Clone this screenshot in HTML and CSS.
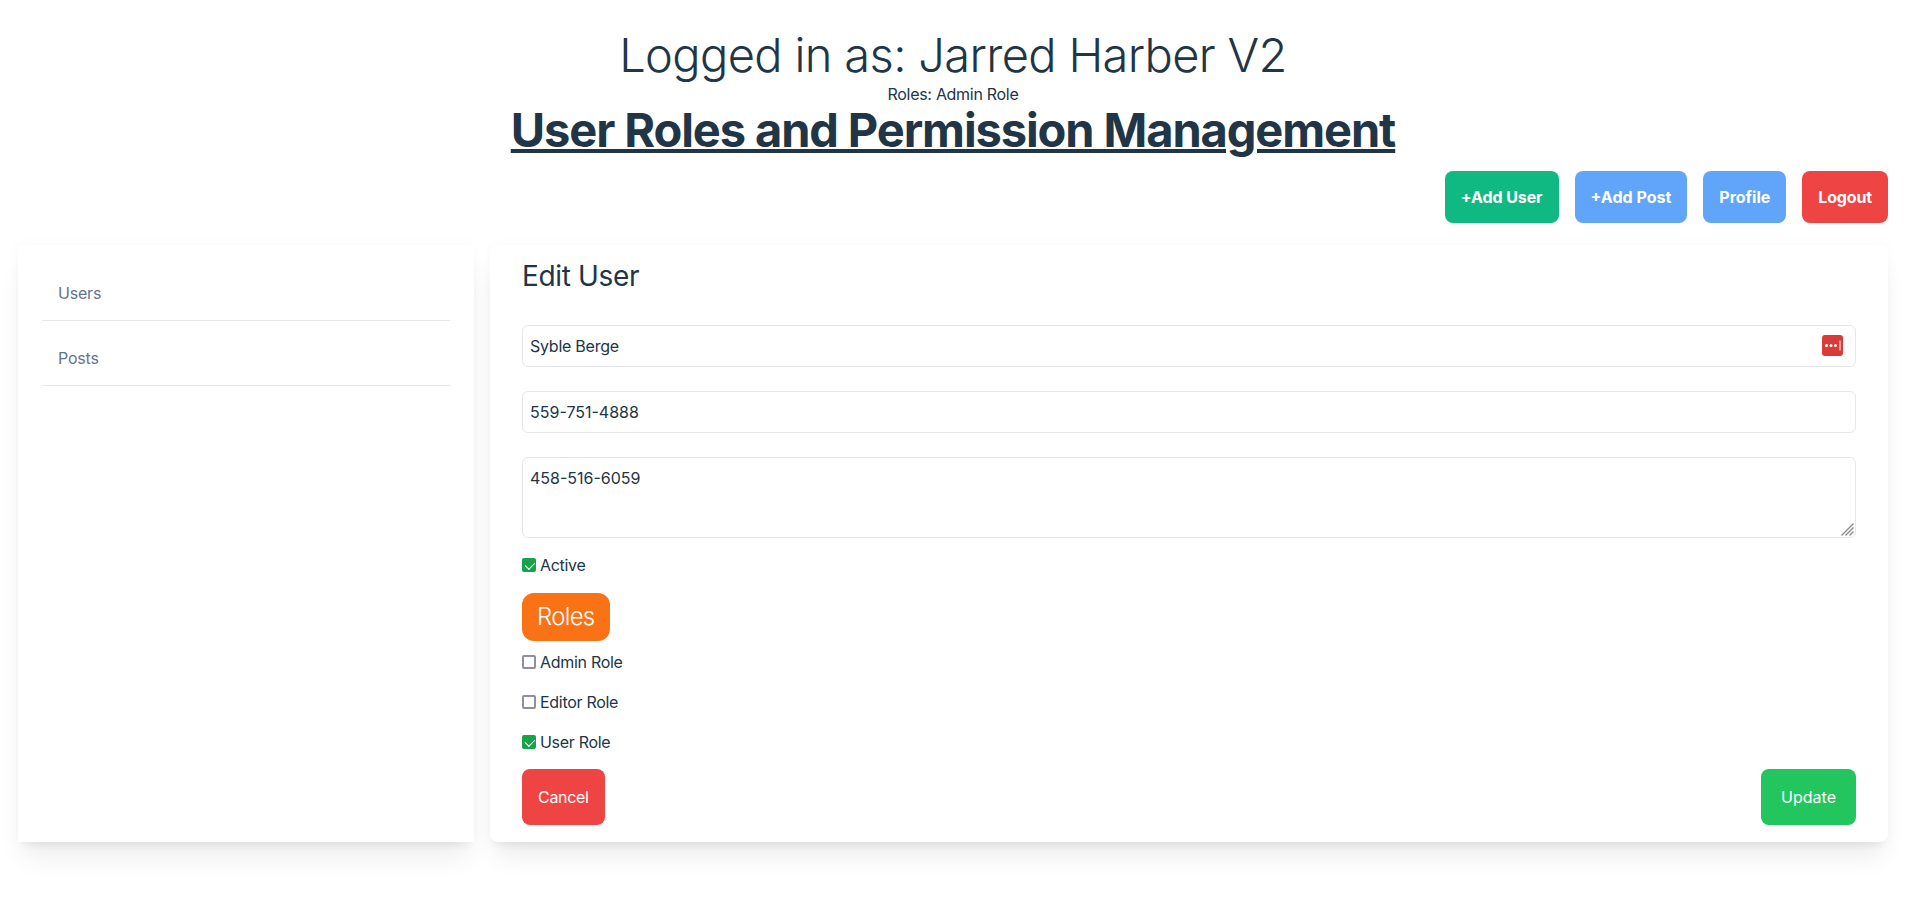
FILE: index.html
```html
<!DOCTYPE html>
<html lang="en">
<head>
<meta charset="utf-8">
<title>User Roles and Permission Management</title>
<link rel="stylesheet" href="styles.css">
</head>
<body>
<div class="app">
  <header class="header">
    <h1 class="logged">Logged in as: Jarred Harber V2</h1>
    <p class="roles-line">Roles: Admin Role</p>
    <h2 class="title">User Roles and Permission Management</h2>
  </header>
  <nav class="actions">
    <a class="btn green" href="#">+Add User</a>
    <a class="btn blue" href="#">+Add Post</a>
    <a class="btn blue" href="#">Profile</a>
    <a class="btn red" href="#">Logout</a>
  </nav>
  <main class="panels">
    <aside class="card sidebar">
      <ul class="menu">
        <li class="menu-item">Users</li>
        <li class="menu-item">Posts</li>
      </ul>
    </aside>
    <section class="card content">
      <h3 class="form-title">Edit User</h3>
      <form class="form">
        <div class="field">
          <input class="input name" type="text" value="Syble Berge">
          <svg class="pm-icon" viewBox="0 0 21 21" aria-hidden="true">
            <rect width="21" height="21" rx="3" fill="#d93a3a"/>
            <circle cx="4.5" cy="10.5" r="1.5" fill="#fff"/>
            <circle cx="9" cy="10.5" r="1.5" fill="#fff"/>
            <circle cx="13.5" cy="10.5" r="1.5" fill="#fff"/>
            <rect x="17.5" y="5.5" width="1" height="10" fill="#fff"/>
          </svg>
        </div>
        <div class="field"><input class="input" type="text" value="559-751-4888"></div>
        <div class="field">
          <textarea class="input area">458-516-6059</textarea>
          <svg class="grip" viewBox="0 0 13 13" aria-hidden="true">
            <path d="M0.5 12.5 L12.5 0.5 M4.5 12.5 L12.5 4.5 M8.5 12.5 L12.5 8.5" stroke="#8a8a8a" stroke-width="1.3" fill="none"/>
          </svg>
        </div>
        <label class="check active"><input type="checkbox" checked>Active</label>
        <div class="roles-badge">Roles</div>
        <label class="check role"><input type="checkbox">Admin Role</label>
        <label class="check role"><input type="checkbox">Editor Role</label>
        <label class="check role"><input type="checkbox" checked>User Role</label>
        <div class="form-actions">
          <button class="form-btn red" type="button">Cancel</button>
          <button class="form-btn green2 wide" type="button">Update</button>
        </div>
      </form>
    </section>
  </main>
</div>
</body>
</html>
```
FILE: styles.css
```css
* { box-sizing: border-box; }
html, body { margin: 0; padding: 0; background: #fff; }
body {
  font-family: Inter, "Liberation Sans", sans-serif;
  color: #213547;
  font-size: 16px;
  line-height: 24px;
}
.app { height: 912px; overflow: hidden; padding: 0 18px; }
.header { text-align: center; padding-top: 25px; }
.logged { margin: 0; font-size: 47px; line-height: 59px; font-weight: 300; letter-spacing: -.65px; }
.roles-line { margin: 0; font-size: 16px; line-height: 20px; letter-spacing: -.3px; }
.title {
  margin: 0; font-size: 47px; line-height: 52px; font-weight: 700; letter-spacing: -1.1px;
  text-decoration: underline; text-decoration-thickness: 4px;
}
.actions { display: flex; justify-content: flex-end; gap: 16px; margin-top: 15px; }
.btn {
  display: block; height: 52px; padding: 14px 16px; border-radius: 8px;
  color: #fff; font-weight: 700; text-decoration: none; font-size: 16px; line-height: 24px;
}
.green { background: #10b981; letter-spacing: -.1px; }
.blue { background: #60a5fa; }
.red { background: #ef4444; }
.btn.red { letter-spacing: -.15px; }
.green2 { background: #22c55e; }
.panels { display: flex; gap: 16px; margin-top: 22px; height: 597px; }
.card {
  background: #fff;
  box-shadow: 0 20px 25px -5px rgba(0,0,0,.07), 0 8px 10px -6px rgba(0,0,0,.07), 0 0 12px rgba(0,0,0,.03);
}
.sidebar { width: 456px; flex: none; padding: 11px 24px; }
.menu { list-style: none; margin: 0; padding: 0; }
.menu-item { height: 65px; padding: 25px 16px 0; color: #64748b; border-bottom: 1px solid #e5e7eb; letter-spacing: -.2px; }
.content { flex: 1; padding: 16px 32px; border-radius: 8px; }
.form-title { margin: 0; font-size: 28px; line-height: 30px; font-weight: 400; letter-spacing: -.35px; }
.form { display: flex; flex-direction: column; margin-top: 34px; }
.field { position: relative; margin-bottom: 24px; }
.input {
  display: block; width: 100%; height: 42px; padding: 8px 7px; border: 1px solid #e5e7eb; border-radius: 6px;
  font: inherit; color: inherit; background: #fff; outline: none;
}
.name { letter-spacing: -.25px; }
.area { height: 81px; resize: none; }
.pm-icon { position: absolute; top: 10px; right: 13px; width: 21px; height: 21px; }
.grip { position: absolute; right: 2px; bottom: 2px; width: 13px; height: 13px; }
.check { display: flex; align-items: center; gap: 4px; height: 24px; letter-spacing: -.3px; }
.check input {
  appearance: none; margin: 0; width: 14px; height: 14px; flex: none; position: relative;
  background: #fff; border: 2px solid #8f8f9d; border-radius: 2px;
}
.check input:checked { background: #16a34a; border-color: #16a34a; }
.check input:checked::after {
  content: ""; position: absolute; left: 2.75px; top: 0; width: 4.5px; height: 8px;
  border: solid #fff; border-width: 0 1.8px 1.8px 0; transform: rotate(45deg);
}
.active { margin-top: -9px; }
.roles-badge {
  align-self: flex-start; margin-top: 16px; height: 48px; padding: 0 15px; border-radius: 12px;
  background: #f97316; color: #fff; font-size: 24px; line-height: 48px; font-weight: 300; letter-spacing: -.7px;
}
.role { margin-top: 16px; }
.roles-badge + .role { margin-top: 9px; }
.form-actions { display: flex; justify-content: space-between; margin-top: 15px; }
.form-btn {
  height: 56px; padding: 0 16px; border: 0; border-radius: 8px; color: #fff;
  font: inherit; font-size: 16px; letter-spacing: -.3px;
}
.wide { padding: 0 20px; letter-spacing: 0; }
```
